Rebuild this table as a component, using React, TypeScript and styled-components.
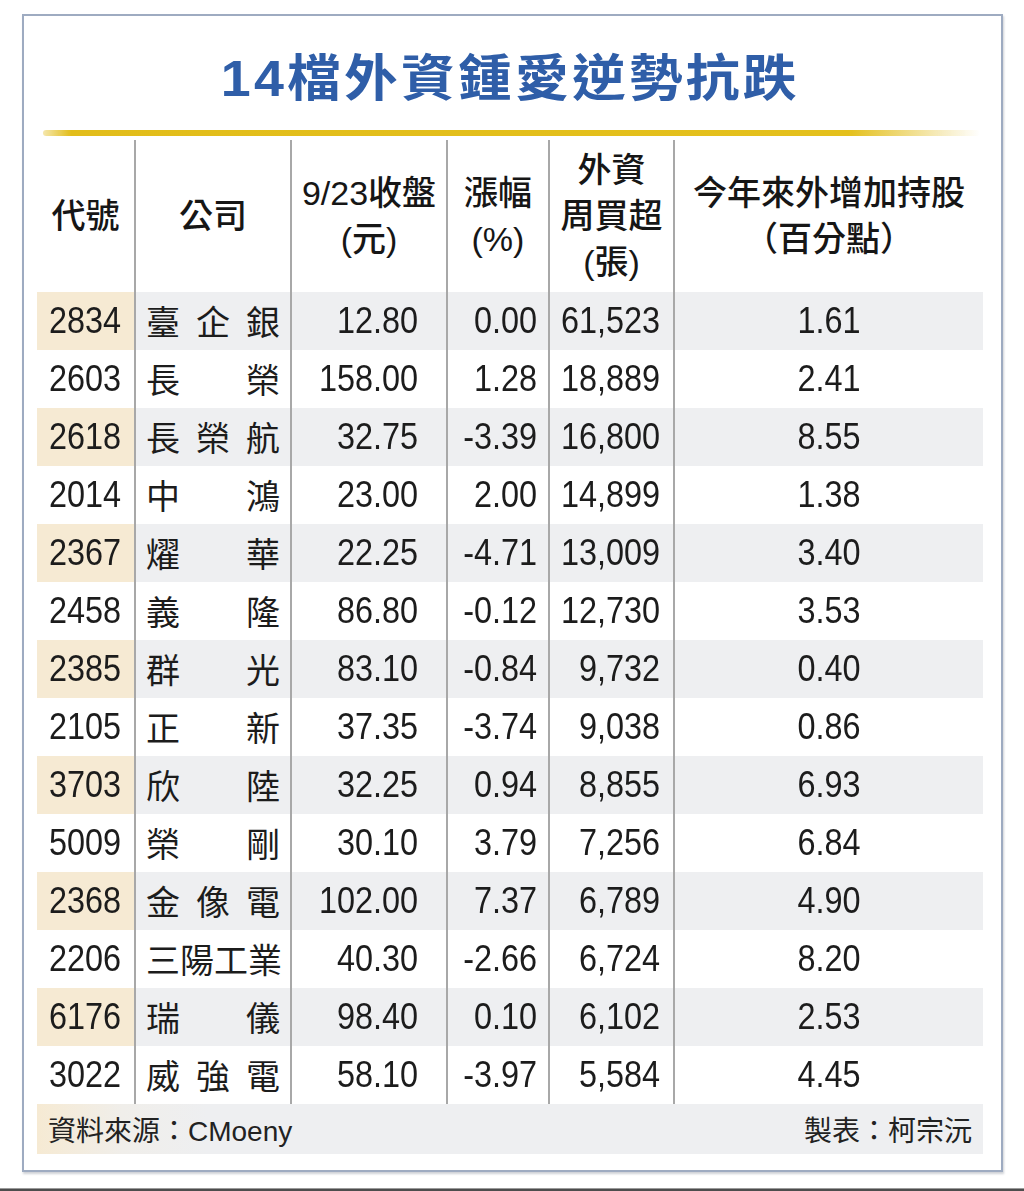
import React from 'react'
import styled, { createGlobalStyle } from 'styled-components'

const ink = '#1c1c1c'
const beige = '#f6ead3'
const stripe = '#eeeff1'
const rule = '#a8a8a8'

const GlobalStyle = createGlobalStyle`
  html, body {
    margin: 0;
    padding: 0;
    background: #ffffff;
  }
  body {
    font-family: "Liberation Sans", "Noto Sans CJK TC", sans-serif;
    color: ${ink};
  }
`

const Frame = styled.section`
  box-sizing: border-box;
  width: 981px;
  height: 1158px;
  margin: 14px 0 0 22px;
  padding: 0 18px 0 13px;
  border: 2px solid #9eabc1;
  box-shadow: 1px 2px 2px rgba(60, 70, 90, 0.25);
  background: #ffffff;
  display: flex;
  flex-direction: column;
`

const TitleBar = styled.header`
  height: 114px;
  padding-top: 35px;
  box-sizing: border-box;
  display: flex;
  justify-content: center;
`

const Title = styled.h1`
  margin: 0;
  display: inline-block;
  font-family: "Liberation Sans", "Noto Sans CJK TC", sans-serif;
  font-size: 50px;
  line-height: 56px;
  font-weight: 700;
  letter-spacing: 3px;
  color: #2f5ea8;
  transform: scaleX(1.075);
`

const GoldLine = styled.div`
  height: 6px;
  margin: 0 3px 4px 6px;
  border-radius: 3px;
  background: linear-gradient(
    to right,
    rgba(226, 186, 20, 0.35) 0%,
    #e2bd1a 3%,
    #e4c01c 86%,
    rgba(236, 214, 120, 0.45) 96%,
    rgba(255, 255, 255, 0) 100%
  );
  filter: blur(0.5px);
`

const Grid = styled.div`
  display: grid;
  grid-template-columns: 97px 156px 156px 102px 125px 310px;
`

const HeadCell = styled.div<{ $first?: boolean }>`
  height: 152px;
  display: flex;
  flex-direction: column;
  align-items: center;
  justify-content: center;
  font-size: 34px;
  line-height: 46px;
  font-weight: 500;
  color: #161616;
  border-left: ${(p) => (p.$first ? 'none' : `2px solid ${rule}`)};
`

const Cell = styled.div<{
  $first?: boolean
  $shade?: boolean
  $align: 'left' | 'center' | 'right'
  $pad?: number
}>`
  height: 58px;
  box-sizing: border-box;
  display: flex;
  align-items: center;
  justify-content: ${(p) =>
    p.$align === 'right' ? 'flex-end' : p.$align === 'center' ? 'center' : 'flex-start'};
  padding-right: ${(p) => p.$pad ?? 0}px;
  background: ${(p) => (p.$shade ? (p.$first ? beige : stripe) : '#ffffff')};
  border-left: ${(p) => (p.$first ? 'none' : `2px solid ${rule}`)};
`

const Num = styled.span<{ $origin: string }>`
  display: inline-block;
  font-family: "Liberation Sans", sans-serif;
  font-size: 36px;
  line-height: 40px;
  color: ${ink};
  transform: scaleX(0.9);
  transform-origin: ${(p) => p.$origin};
  white-space: nowrap;
`

const NameCell = styled.div<{ $shade?: boolean }>`
  height: 58px;
  box-sizing: border-box;
  display: flex;
  align-items: center;
  justify-content: space-between;
  padding: 0 10px 0 10px;
  background: ${(p) => (p.$shade ? stripe : '#ffffff')};
  border-left: 2px solid ${rule};
  font-family: "Noto Sans CJK TC", sans-serif;
  font-size: 34px;
  line-height: 40px;
  color: ${ink};
`

const Footer = styled.footer`
  height: 50px;
  display: flex;
  align-items: center;
  justify-content: space-between;
  padding: 0 11px;
  background: linear-gradient(to right, ${beige} 0%, #f0eeea 9%, ${stripe} 18%, ${stripe} 100%);
  font-family: "Liberation Sans", "Noto Sans CJK TC", sans-serif;
  font-size: 28px;
  color: #222222;
`

const BottomRule = styled.div`
  height: 3px;
  margin-top: 16px;
  background: #4d4d4d;
  border-top: 1px solid #9a9a9a;
`

type Row = [string, string, string, string, string, string]

const rows: Row[] = [
  ['2834', '臺企銀', '12.80', '0.00', '61,523', '1.61'],
  ['2603', '長榮', '158.00', '1.28', '18,889', '2.41'],
  ['2618', '長榮航', '32.75', '-3.39', '16,800', '8.55'],
  ['2014', '中鴻', '23.00', '2.00', '14,899', '1.38'],
  ['2367', '燿華', '22.25', '-4.71', '13,009', '3.40'],
  ['2458', '義隆', '86.80', '-0.12', '12,730', '3.53'],
  ['2385', '群光', '83.10', '-0.84', '9,732', '0.40'],
  ['2105', '正新', '37.35', '-3.74', '9,038', '0.86'],
  ['3703', '欣陸', '32.25', '0.94', '8,855', '6.93'],
  ['5009', '榮剛', '30.10', '3.79', '7,256', '6.84'],
  ['2368', '金像電', '102.00', '7.37', '6,789', '4.90'],
  ['2206', '三陽工業', '40.30', '-2.66', '6,724', '8.20'],
  ['6176', '瑞儀', '98.40', '0.10', '6,102', '2.53'],
  ['3022', '威強電', '58.10', '-3.97', '5,584', '4.45'],
]

const headers: string[][] = [
  ['代號'],
  ['公司'],
  ['9/23收盤', '(元)'],
  ['漲幅', '(%)'],
  ['外資', '周買超', '(張)'],
  ['今年來外增加持股', '（百分點）'],
]

const App = () => (
  <>
    <GlobalStyle />
    <Frame>
      <TitleBar>
        <Title>14檔外資鍾愛逆勢抗跌</Title>
      </TitleBar>
      <GoldLine />
      <Grid>
        {headers.map((lines, i) => (
          <HeadCell key={i} $first={i === 0}>
            {lines.map((l) => (
              <span key={l}>{l}</span>
            ))}
          </HeadCell>
        ))}
        {rows.map((r, i) => {
          const shade = i % 2 === 0
          return (
            <React.Fragment key={r[0]}>
              <Cell $first $shade={shade} $align="center">
                <Num $origin="center">{r[0]}</Num>
              </Cell>
              <NameCell $shade={shade}>
                {r[1].split('').map((c, j) => (
                  <span key={j}>{c}</span>
                ))}
              </NameCell>
              <Cell $shade={shade} $align="right" $pad={28}>
                <Num $origin="right">{r[2]}</Num>
              </Cell>
              <Cell $shade={shade} $align="right" $pad={11}>
                <Num $origin="right">{r[3]}</Num>
              </Cell>
              <Cell $shade={shade} $align="right" $pad={13}>
                <Num $origin="right">{r[4]}</Num>
              </Cell>
              <Cell $shade={shade} $align="center">
                <Num $origin="center">{r[5]}</Num>
              </Cell>
            </React.Fragment>
          )
        })}
      </Grid>
      <Footer>
        <span>資料來源：CMoeny</span>
        <span>製表：柯宗沅</span>
      </Footer>
    </Frame>
    <BottomRule />
  </>
)

export default App
